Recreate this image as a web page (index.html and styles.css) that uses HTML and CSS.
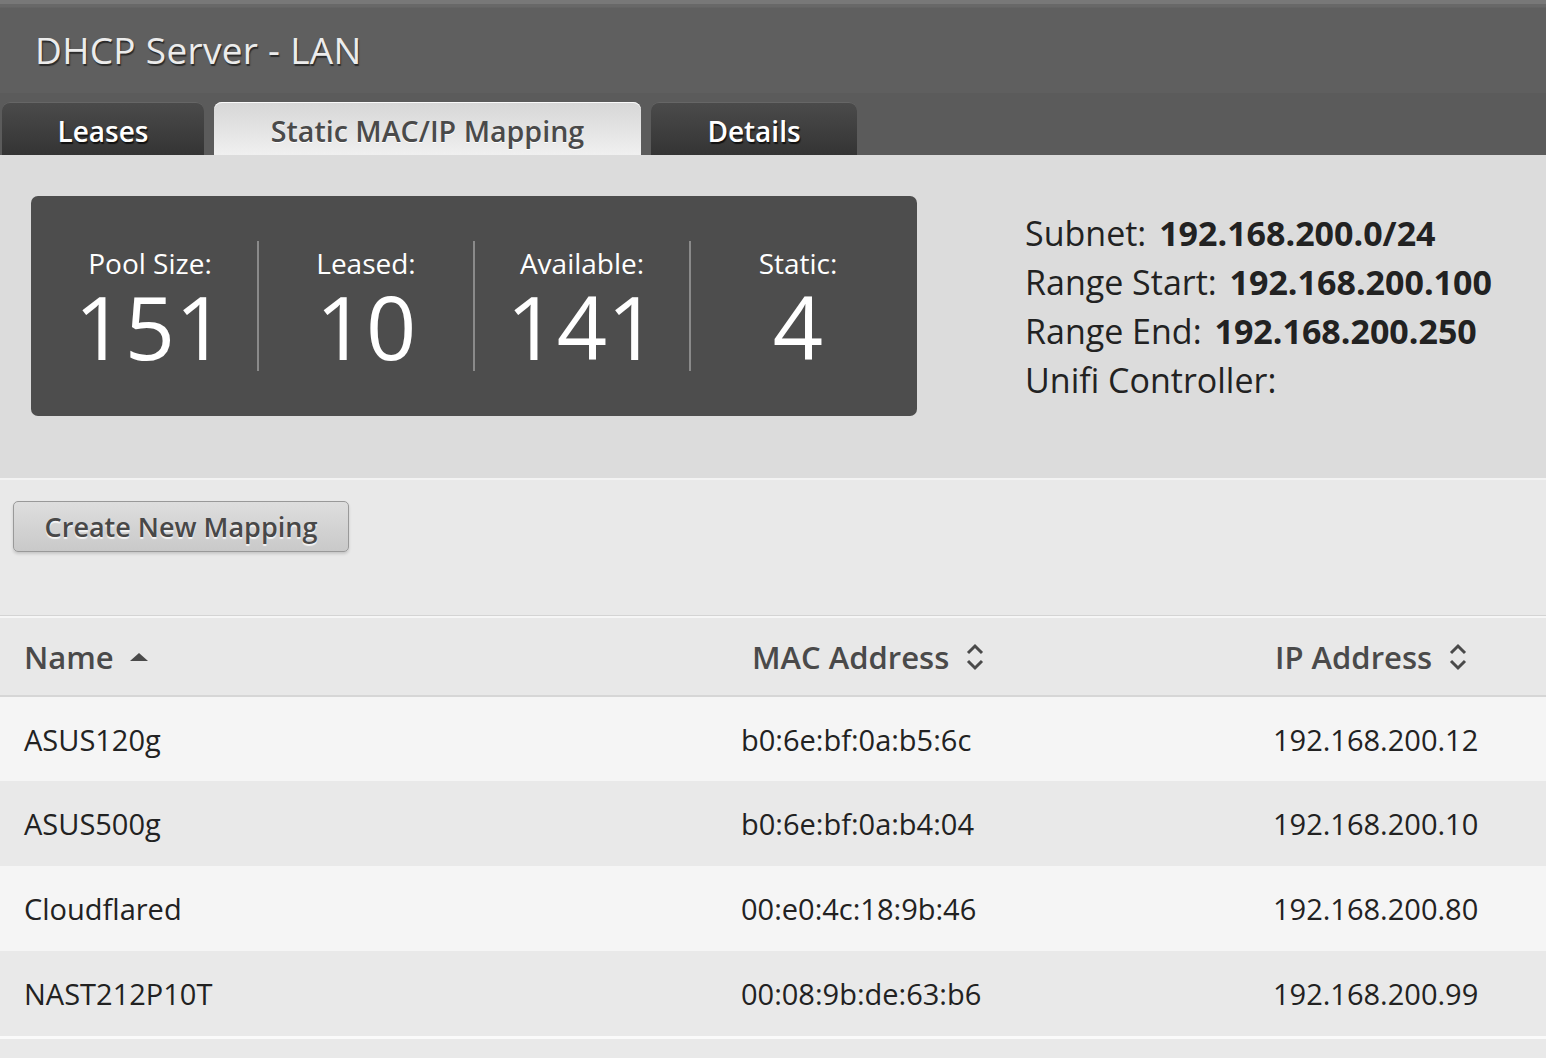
FILE: index.html
```html
<!DOCTYPE html>
<html lang="en">
<head>
<meta charset="UTF-8">
<meta name="viewport" content="width=device-width, initial-scale=1.0">
<title>DHCP Server - LAN</title>
<link rel="stylesheet" href="styles.css">
</head>

<body>
<div class="page-head">
    <h1 class="page-title">DHCP Server - LAN</h1>
</div>

<div class="tab-bar">
    <div class="tab" id="leasesTab">Leases</div>
    <div class="tab active" id="mappingTab">Static MAC/IP Mapping</div>
    <div class="tab" id="detailsTab">Details</div>
</div>

<div class="stats">
    <div class="stat-box">
        <div class="stat">
            <p class="stat_name">Pool Size:</p>
            <p class="stat_num">151</p>
        </div>
        <div class="stat">
            <p class="stat_name">Leased:</p>
            <p class="stat_num">10</p>
        </div>
        <div class="stat">
            <p class="stat_name">Available:</p>
            <p class="stat_num">141</p>
        </div>
        <div class="stat">
            <p class="stat_name">Static:</p>
            <p class="stat_num">4</p>
        </div>
    </div>
    <div class="info">
        <p>Subnet: <b>192.168.200.0/24</b></p>
        <p>Range Start: <b>192.168.200.100</b></p>
        <p>Range End: <b>192.168.200.250</b></p>
        <p>Unifi Controller:</p>
    </div>
</div>

<div class="actions">
    <button class="btn" id="createBtn">Create New Mapping</button>
</div>

<table class="mappings">
    <thead>
        <tr>
            <th class="col-name">Name
                <svg class="sort" width="20" height="12" viewBox="0 0 20 12"><path d="M1 10 L10 2 L19 10 Z" fill="#4a4a4a"/></svg>
            </th>
            <th class="col-mac">MAC Address
                <svg class="sort" width="22" height="28" viewBox="0 0 22 28"><path d="M4 10 L11 3 L18 10 M4 18 L11 25 L18 18" fill="none" stroke="#4a4a4a" stroke-width="3"/></svg>
            </th>
            <th class="col-ip">IP Address
                <svg class="sort" width="22" height="28" viewBox="0 0 22 28"><path d="M4 10 L11 3 L18 10 M4 18 L11 25 L18 18" fill="none" stroke="#4a4a4a" stroke-width="3"/></svg>
            </th>
        </tr>
    </thead>
    <tbody>
        <tr><td>ASUS120g</td><td>b0:6e:bf:0a:b5:6c</td><td>192.168.200.12</td></tr>
        <tr><td>ASUS500g</td><td>b0:6e:bf:0a:b4:04</td><td>192.168.200.10</td></tr>
        <tr><td>Cloudflared</td><td>00:e0:4c:18:9b:46</td><td>192.168.200.80</td></tr>
        <tr><td>NAST212P10T</td><td>00:08:9b:de:63:b6</td><td>192.168.200.99</td></tr>
    </tbody>
</table>
<div class="table-foot"></div>
</body>
</html>
```

FILE: styles.css
```css
* {
    box-sizing: border-box;
}
body {
    margin: 0;
    font-family: "Open Sans", "Noto Sans", sans-serif;
    background-color: #e9e9e9;
    color: #222;
}
p {
    margin: 0;
}
.page-head {
    height: 93px;
    border-top: 4px solid #787878;
    background: linear-gradient(#686868 0, #686868 3px, #5f5f5f 4px, #5f5f5f);
    padding: 23px 0 0 35px;
}
.page-title {
    margin: 0;
    font-size: 37px;
    font-weight: normal;
    line-height: 46px;
    color: #ececec;
    text-shadow: 1px 2px 1px #2b2b2b;
    letter-spacing: 0.3px;
}
.tab-bar {
    height: 62px;
    background-color: #5b5b5b;
    display: flex;
    align-items: flex-end;
    gap: 10px;
    padding-left: 2px;
}
.tab {
    height: 53px;
    border-radius: 8px 8px 0 0;
    background: linear-gradient(#4b4b4b, #343434);
    box-shadow: inset 0 1px 0 #666;
    color: #fff;
    font-size: 28px;
    font-weight: 600;
    text-align: center;
    line-height: 58px;
    text-shadow: 1px 2px 1px #111;
}
#leasesTab {
    width: 202px;
}
#mappingTab {
    width: 427px;
}
#detailsTab {
    width: 206px;
}
.tab.active {
    background: linear-gradient(#d6d6d6, #f0f0f0);
    box-shadow: inset 0 1px 0 #fafafa;
    color: #4a4a4a;
    font-size: 28.6px;
    font-weight: 600;
    text-shadow: 0 1px 0 #fff;
}
.stats {
    height: 325px;
    background-color: #dcdcdc;
    border-bottom: 2px solid #f3f3f3;
    display: flex;
    align-items: flex-start;
    gap: 108px;
    padding: 41px 0 0 31px;
}
.stat-box {
    width: 886px;
    height: 220px;
    background-color: #4d4d4d;
    border-radius: 7px;
    display: flex;
    padding: 45px 12px;
}
.stat {
    flex: 1;
    text-align: center;
    color: #fff;
    border-left: 2px solid #8a8a8a;
    padding-top: 5px;
}
.stat:first-child {
    border-left: none;
}
.stat_name {
    font-size: 28px;
    line-height: 34px;
}
.stat_num {
    font-size: 88px;
    line-height: 80px;
    font-weight: 400;
    margin-top: 6px;
}
.info {
    margin-top: 13px;
    font-size: 34px;
    line-height: 49px;
    color: #222;
}
.info b {
    font-weight: 700;
    margin-left: 4px;
}
.actions {
    height: 136px;
    padding: 21px 0 0 13px;
    border-bottom: 1px solid #d4d4d4;
}
.btn {
    width: 336px;
    height: 51px;
    border: 1px solid #999;
    border-radius: 5px;
    background: linear-gradient(#dedede, #c9c9c9);
    box-shadow: 0 2px 3px rgba(0, 0, 0, 0.15);
    font-family: "Open Sans", "Noto Sans", sans-serif;
    font-size: 27px;
    font-weight: 600;
    color: #484848;
    text-shadow: 0 2px 1px #f4f4f4;
    padding: 0;
}
.mappings {
    width: 100%;
    border-collapse: collapse;
    border-top: 2px solid #f6f6f6;
}
.mappings th {
    height: 79px;
    background-color: #e8e8e8;
    border-bottom: 2px solid #d6d6d6;
    text-align: left;
    font-size: 31px;
    font-weight: 600;
    color: #4a4a4a;
    padding: 0 0 0 24px;
    white-space: nowrap;
}
.mappings td {
    height: 85px;
    font-size: 29px;
    color: #222;
    padding: 0 0 0 24px;
}
.mappings tbody tr:nth-child(odd) {
    background-color: #f5f5f5;
}
.mappings tbody tr:nth-child(even) {
    background-color: #e9e9e9;
}
.col-name {
    width: 717px;
}
.col-mac {
    width: 532px;
}
.mappings th.col-mac {
    padding-left: 35px;
}
.mappings th.col-ip {
    padding-left: 26px;
}
.sort {
    vertical-align: middle;
    margin-left: 7px;
    position: relative;
    top: -3px;
}
.table-foot {
    border-top: 3px solid #fafafa;
    height: 30px;
    background-color: #e9e9e9;
}
```
